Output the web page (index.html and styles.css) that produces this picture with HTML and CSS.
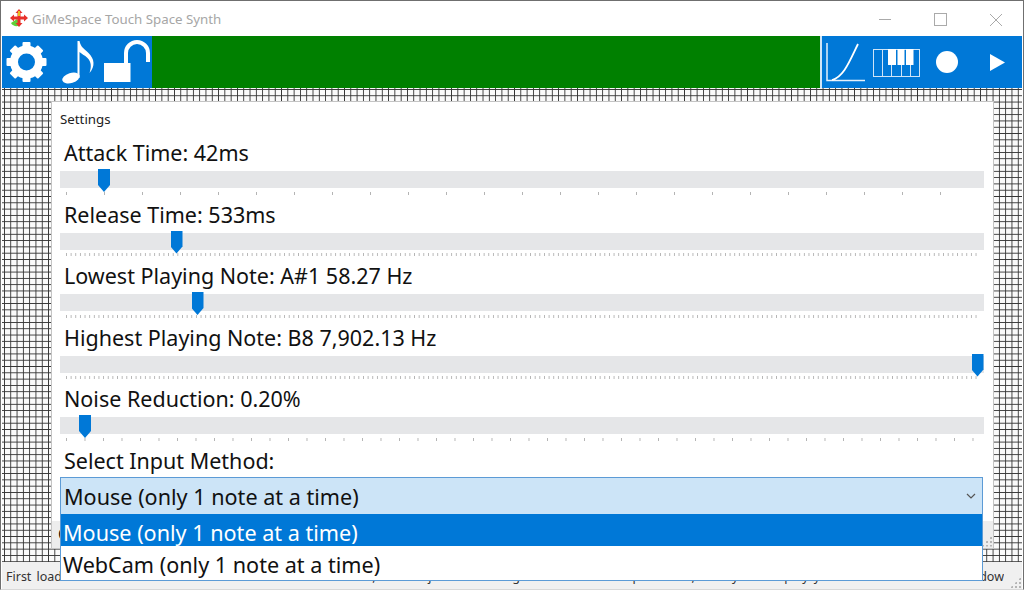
FILE: index.html
```html
<!DOCTYPE html>
<html lang="en">
<head>
<meta charset="utf-8">
<title>GiMeSpace Touch Space Synth</title>
<link rel="stylesheet" href="styles.css">
</head>
<body>
<div class="window">
  <header class="titlebar">
    <svg class="app-icon" viewBox="0 0 18 18" width="18" height="18">
      <path d="M1 14c2 4 8 4 10 1l-4-5z" fill="#5fd038"/>
      <path d="M9 0l3.500 4H10.500v3.500H14V5.500l4 3.500-4 3.500V10.500h-3.500V14h2L9 18l-3.500-4h2v-3.500H4v2L0 9l4-3.500v2h3.500V4h-2z" fill="#e8302a"/>
      <path d="M9 2v5" stroke="#e8c020" stroke-width="2"/>
    </svg>
    <span class="app-title">GiMeSpace Touch Space Synth</span>
    <div class="win-controls">
      <svg viewBox="0 0 56 34" width="56" height="34"><path d="M23 17.500h12" stroke="#aaa" fill="none"/></svg>
      <svg viewBox="0 0 56 34" width="56" height="34"><rect x="22.500" y="11.500" width="12" height="12" stroke="#aaa" fill="none"/></svg>
      <svg viewBox="0 0 56 34" width="56" height="34"><path d="M22 12l12 12M34 12L22 24" stroke="#aaa" fill="none"/></svg>
    </div>
  </header>

  <nav class="toolbar">
    <div class="tool-group">
      <svg viewBox="2 36 50 52" width="50" height="52">
        <circle cx="26.500" cy="62" r="12.500" fill="none" stroke="#fff" stroke-width="8"/>
        <g fill="#fff">
          <rect x="22.500" y="42" width="8" height="8" rx="1"/>
          <rect x="22.500" y="42" width="8" height="8" rx="1" transform="rotate(45 26.500 62)"/>
          <rect x="22.500" y="42" width="8" height="8" rx="1" transform="rotate(90 26.500 62)"/>
          <rect x="22.500" y="42" width="8" height="8" rx="1" transform="rotate(135 26.500 62)"/>
          <rect x="22.500" y="42" width="8" height="8" rx="1" transform="rotate(180 26.500 62)"/>
          <rect x="22.500" y="42" width="8" height="8" rx="1" transform="rotate(225 26.500 62)"/>
          <rect x="22.500" y="42" width="8" height="8" rx="1" transform="rotate(270 26.500 62)"/>
          <rect x="22.500" y="42" width="8" height="8" rx="1" transform="rotate(315 26.500 62)"/>
        </g>
      </svg>
      <svg viewBox="52 36 48 52" width="48" height="52">
        <ellipse cx="71" cy="78" rx="9" ry="5" transform="rotate(-18 71 78)" fill="#fff"/>
        <path d="M77.500 41h2c1 6 5 8 9 12 6 6 7 13 1 20 2-6 2-11-2-15-3-3-6-4-8-6v26h-2z" fill="#fff"/>
      </svg>
      <svg viewBox="100 36 52 52" width="52" height="52">
        <rect x="104" y="63" width="26.500" height="19" fill="#fff"/>
        <path d="M126 63V53a10.500 10.500 0 0 1 22 0v9" fill="none" stroke="#fff" stroke-width="4"/>
      </svg>
    </div>
    <div class="tool-spacer"></div>
    <div class="tool-group tool-right">
      <svg viewBox="822 36 46 52" width="46" height="52">
        <path d="M827 43v37.500h38" fill="none" stroke="#e4f0fb" stroke-width="1.500"/>
        <path d="M832 80c12-3 18-20 26-36" fill="none" stroke="#fff" stroke-width="1.800"/>
      </svg>
      <svg viewBox="868 36 56 52" width="56" height="52">
        <rect x="873.500" y="49.500" width="46" height="27" fill="none" stroke="#cfe4f7"/>
        <path d="M882.500 49v27M891.500 65v11M901.500 65v11M910.500 65v11" stroke="#cfe4f7"/>
        <path d="M888 49h8v16h-8zM897.500 49h7v16h-7zM906 49h7.500v16H906z" fill="#fff"/>
      </svg>
      <svg viewBox="924 36 46 52" width="46" height="52"><circle cx="947" cy="62" r="11" fill="#fff"/></svg>
      <svg viewBox="970 36 52 52" width="52" height="52"><path d="M990 54l15 8.500-15 8.500z" fill="#fff"/></svg>
    </div>
  </nav>

  <main class="desk">
    <section class="panel">
      <div class="panel-title">Settings</div>

      <div class="setting">
        <div class="label">Attack Time: 42ms</div>
        <div class="track"><span class="thumb" style="left:38px"></span></div>
        <div class="ticks ticks-38"></div>
      </div>
      <div class="setting">
        <div class="label">Release Time: 533ms</div>
        <div class="track"><span class="thumb" style="left:110.500px"></span></div>
        <div class="ticks ticks-dense"></div>
      </div>
      <div class="setting">
        <div class="label">Lowest Playing Note: A#1 58.27 Hz</div>
        <div class="track"><span class="thumb" style="left:131.500px"></span></div>
        <div class="ticks ticks-dense"></div>
      </div>
      <div class="setting">
        <div class="label">Highest Playing Note: B8 7,902.13 Hz</div>
        <div class="track"><span class="thumb" style="left:911.500px"></span></div>
        <div class="ticks ticks-dense"></div>
      </div>
      <div class="setting">
        <div class="label">Noise Reduction: 0.20%</div>
        <div class="track"><span class="thumb" style="left:19px"></span></div>
        <div class="ticks ticks-18"></div>
      </div>

      <div class="label">Select Input Method:</div>
      <div class="combo">
        <span>Mouse (only 1 note at a time)</span>
        <svg class="chevron" viewBox="0 0 10 6" width="10" height="6"><path d="M1 1l4 4 4-4" fill="none" stroke="#555" stroke-width="1.200"/></svg>
        <ul class="dropdown">
          <li class="option option-selected">Mouse (only 1 note at a time)</li>
          <li class="option">WebCam (only 1 note at a time)</li>
        </ul>
      </div>

      <div class="panel-footer">
        <span>Close</span>
        <i class="grip"></i>
      </div>
    </section>
  </main>

  <footer class="statusbar">
    <span class="status-text">First load or create an instrument in the instrument window, after adjust the settings and select the input mode, then you can play your instrument in this window</span>
    <i class="grip"></i>
  </footer>
</div>
</body>
</html>
```

FILE: styles.css
```css
* { box-sizing: border-box; }

html, body {
  margin: 0;
  height: 590px;
  overflow: hidden;
  background: #fff;
}

body {
  font-family: "Noto Sans", "Open Sans", sans-serif;
  color: #111;
}

.window {
  width: 1024px;
  height: 590px;
  display: flex;
  flex-direction: column;
  border: 1px solid #6f6f6f;
  border-bottom-color: #d8d8d8;
  padding: 0 1px;
  overflow: hidden;
}

.titlebar {
  flex: 0 0 35px;
  min-height: 0;
  display: flex;
  align-items: center;
  padding-left: 8px;
  background: #fff;
}

.app-icon { margin-top: -1px; }

.app-title {
  margin-left: 4px;
  font-size: 13.300px;
  color: #a6a6a6;
  white-space: nowrap;
}

.win-controls {
  margin-left: auto;
  display: flex;
  width: 168px;
  transform: translateX(2px);
}

.toolbar {
  flex: 0 0 52px;
  display: flex;
  background: #008000;
}

.tool-group {
  display: flex;
  background: #0078d7;
}

.tool-group svg { display: block; }

.tool-spacer { flex: 1; }

.tool-right { border-left: 2px solid #cfe4f7; }

.desk {
  flex: 0 0 474px;
  padding: 14px 29px 14px 50px;
  background-color: #fafafa;
  background-image:
    linear-gradient(90deg, #333 1px, transparent 1px),
    linear-gradient(180deg, #333 1px, transparent 1px);
  background-size: 6.300px 6.300px;
  background-position: 2px 1px;
}

.panel {
  height: 446px;
  display: flex;
  flex-direction: column;
  padding: 0 0 0 8px;
  background: #fff;
  box-shadow: 0 0 0 1px #c4c4c4;
}

.panel-title {
  flex: 0 0 36px;
  padding-top: 8px;
  font-size: 13.300px;
  line-height: 18px;
  color: #222;
}

.setting {
  flex: 0 0 61.500px;
  margin-right: 9px;
}

.label {
  height: 30px;
  padding-left: 4px;
  font-size: 21.500px;
  line-height: 30px;
  white-space: nowrap;
}

.track {
  position: relative;
  height: 17px;
  margin-top: 3px;
  background: #e5e6e8;
}

.thumb {
  position: absolute;
  top: -2px;
  width: 12px;
  height: 23px;
  background: #0078d7;
  clip-path: polygon(0 0, 100% 0, 100% 70%, 50% 100%, 0 70%);
}

.ticks {
  height: 3px;
  margin: 3.500px 6px 0;
  background-repeat: repeat-x;
  background-image: linear-gradient(90deg, #b4b4b4 1px, transparent 1px);
}

.ticks-38 { background-size: 38px 3px; }
.ticks-dense { background-size: 4.650px 3px; }
.ticks-18 { background-size: 18.500px 3px; }

.combo {
  position: relative;
  z-index: 5;
  flex: 0 0 38px;
  display: flex;
  align-items: center;
  justify-content: space-between;
  width: 923px;
  margin-top: 1.500px;
  padding: 0 6px 0 3px;
  background: #cce4f7;
  border: 1px solid #5c9bd6;
  font-size: 21.600px;
}

.chevron { flex: none; }

.dropdown {
  position: absolute;
  top: 100%;
  left: -1px;
  right: -1px;
  margin: 0;
  padding: 0 0 2px;
  list-style: none;
  background: #fff;
  border: 1px solid #5c9bd6;
  border-top: 0;
}

.option {
  height: 32px;
  padding: 0 2px;
  font-size: 21.600px;
  line-height: 37px;
}

.option-selected {
  background: #0078d7;
  color: #fff;
}

.panel-footer {
  position: relative;
  flex: 0 0 27px;
  margin: 5.500px 0 0 -8px;
  padding-left: 6px;
  background: #ededed;
  font-size: 16px;
  line-height: 27px;
}

.statusbar {
  position: relative;
  flex: 0 0 27px;
  padding-left: 4px;
  background: #f0f0f0;
  font-size: 12.500px;
  line-height: 30px;
  overflow: hidden;
  color: #333;
}

.status-text {
  display: block;
  width: 998px;
  height: 27px;
  overflow: hidden;
  text-align: justify;
  text-align-last: justify;
}

.grip {
  position: absolute;
  right: 1px;
  bottom: 1px;
  width: 11px;
  height: 11px;
  background-image: radial-gradient(circle, #b5b5b5 1px, transparent 1.300px);
  background-size: 4px 4px;
  clip-path: polygon(100% 0, 100% 100%, 0 100%);
}
```
